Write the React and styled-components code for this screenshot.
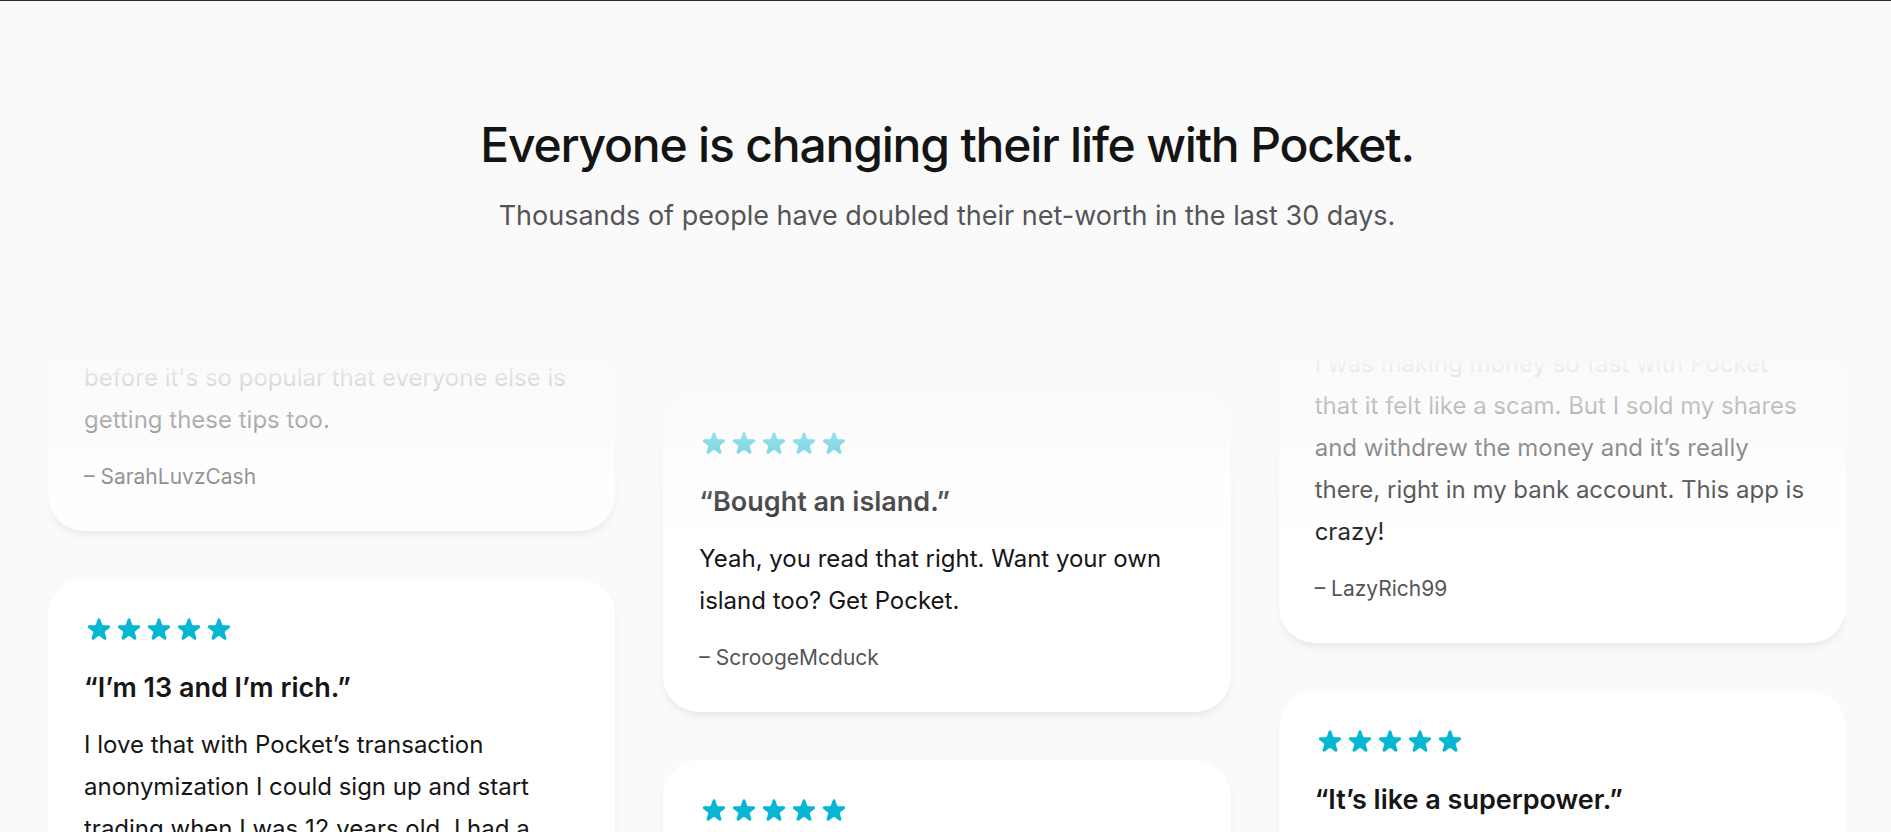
import React from "react";
import styled, { createGlobalStyle } from "styled-components";

const GlobalStyle = createGlobalStyle`
  * {
    box-sizing: border-box;
  }
  html,
  body {
    margin: 0;
    padding: 0;
    background: #fafafa;
    font-family: Inter, "Noto Sans", "Liberation Sans", sans-serif;
    -webkit-font-smoothing: antialiased;
  }
`;

const reviewColumns = [
  {
    shift: -229,
    reviews: [
      {
        title: "Wish I could give 6 stars",
        body: "This is literally the most important app you will ever download in your life. Get on this before it's so popular that everyone else is getting these tips too.",
        author: "SarahLuvzCash",
      },
      {
        title: "I’m 13 and I’m rich.",
        body: "I love that with Pocket’s transaction anonymization I could sign up and start trading when I was 12 years old. I had a million dollars before I had braces.",
        author: "ManInTheMarket",
      },
    ],
  },
  {
    shift: 36,
    reviews: [
      {
        title: "Bought an island.",
        body: "Yeah, you read that right. Want your own island too? Get Pocket.",
        author: "ScroogeMcduck",
      },
      {
        title: "No more debt!",
        body: "After 2 weeks of trading on Pocket I was able to pay off my student loans.",
        author: "BruceWayne",
      },
    ],
  },
  {
    shift: -159,
    reviews: [
      {
        title: "Too good to be true.",
        body: "I was making money so fast with Pocket that it felt like a scam. But I sold my shares and withdrew the money and it’s really there, right in my bank account. This app is crazy!",
        author: "LazyRich99",
      },
      {
        title: "It’s like a superpower.",
        body: "Every tip Pocket has sent me has paid off. It’s like playing Wall Street with a cheat code.",
        author: "MaryJ",
      },
    ],
  },
];

const StarIcon = () => (
  <Star viewBox="0 0 20 20" aria-hidden="true">
    <path d="M9.049 2.927c.3-.921 1.603-.921 1.902 0l1.07 3.292a1 1 0 00.95.69h3.462c.969 0 1.371 1.24.588 1.81l-2.8 2.034a1 1 0 00-.364 1.118l1.07 3.292c.3.921-.755 1.688-1.54 1.118l-2.8-2.034a1 1 0 00-1.175 0l-2.8 2.034c-.784.57-1.838-.197-1.539-1.118l1.07-3.292a1 1 0 00-.364-1.118L2.98 8.72c-.783-.57-.38-1.81.588-1.81h3.461a1 1 0 00.951-.69l1.07-3.292z" />
  </Star>
);

const Review = ({ title, body, author }) => (
  <Card>
    <Stars>
      {[0, 1, 2, 3, 4].map((i) => (
        <StarIcon key={i} />
      ))}
    </Stars>
    <Quote>
      <Title>{title}</Title>
      <Body>{body}</Body>
    </Quote>
    <Author>{author}</Author>
  </Card>
);

const App = () => {
  return (
    <Page>
      <GlobalStyle />
      <Section>
        <Header>
          <Heading>Everyone is changing their life with Pocket.</Heading>
          <Subheading>
            Thousands of people have doubled their net-worth in the last 30
            days.
          </Subheading>
        </Header>
        <Grid>
          {reviewColumns.map((col, i) => (
            <Column key={i} $shift={col.shift}>
              {col.reviews.map((r) => (
                <Review key={r.author} {...r} />
              ))}
            </Column>
          ))}
          <FadeTop />
        </Grid>
      </Section>
    </Page>
  );
};

const Page = styled.div`
  border-top: 1px solid #2f2f2f;
  min-height: 831px;
  background: #fafafa;
`;

const Section = styled.section`
  padding: 117px 45px 0 48px;
`;

const Header = styled.div`
  text-align: center;
`;

const Heading = styled.h2`
  margin: 0;
  font-size: 48px;
  line-height: 54px;
  font-weight: 500;
  letter-spacing: -0.025em;
  color: #141414;
`;

const Subheading = styled.p`
  margin: 23px 0 0;
  font-size: 27px;
  line-height: 42px;
  color: #555558;
`;

const Grid = styled.div`
  position: relative;
  margin-top: 120px;
  height: 1176px;
  display: grid;
  grid-template-columns: repeat(3, 1fr);
  align-items: start;
  gap: 48px;
  overflow: hidden;
`;

const Column = styled.div`
  display: flex;
  flex-direction: column;
  gap: 48px;
  transform: translateY(${(p) => p.$shift}px);
`;

const FadeTop = styled.div`
  pointer-events: none;
  position: absolute;
  left: 0;
  right: 0;
  top: 0;
  height: 192px;
  background: linear-gradient(to bottom, #fafafa, rgba(250, 250, 250, 0));
`;

const Card = styled.figure`
  margin: 0;
  padding: 36px;
  border-radius: 36px;
  background: #fff;
  box-shadow: 0 6px 9px -1.5px rgba(20, 20, 20, 0.05),
    0 3px 6px -3px rgba(20, 20, 20, 0.05);
`;

const Stars = styled.div`
  display: flex;
`;

const Star = styled.svg`
  width: 30px;
  height: 30px;
  fill: #06b6d4;
`;

const Quote = styled.blockquote`
  margin: 24px 0 0;
  color: #161616;
`;

const Title = styled.p`
  margin: 0;
  font-size: 27px;
  line-height: 38px;
  font-weight: 600;
  &::before {
    content: "“";
  }
  &::after {
    content: "”";
  }
`;

const Body = styled.p`
  margin: 17px 0 0;
  font-size: 24px;
  line-height: 42px;
`;

const Author = styled.figcaption`
  margin-top: 18px;
  font-size: 21px;
  line-height: 36px;
  color: #555558;
  &::before {
    content: "– ";
  }
`;

export default App;
